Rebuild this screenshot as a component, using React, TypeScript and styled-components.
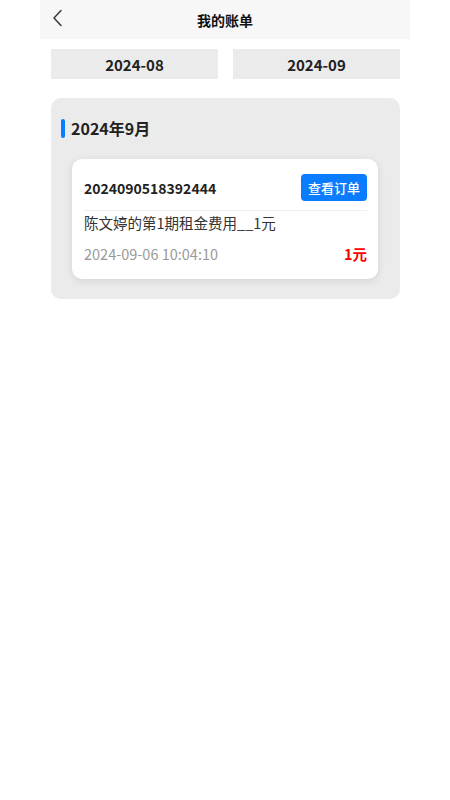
import React from 'react'
import styled, { createGlobalStyle } from 'styled-components'

const GlobalStyle = createGlobalStyle`
  body {
    margin: 0;
    background: #fff;
    font-family: "Noto Sans CJK SC", "Noto Sans", sans-serif;
    color: #222;
  }
`

const Page = styled.div`
  width: 370px;
  margin: 0 auto;
`

const Header = styled.div`
  height: 39px;
  background: #f7f7f7;
  display: flex;
  align-items: center;
  justify-content: center;
  position: relative;
`

const BackButton = styled.div`
  position: absolute;
  left: 12px;
  top: 9px;
  width: 14px;
  height: 18px;
  display: flex;
  align-items: center;
`

const Title = styled.h1`
  margin: 0;
  font-size: 14px;
  font-weight: 700;
  color: #111;
`

const MonthTabs = styled.div`
  display: grid;
  grid-template-columns: 1fr 1fr;
  gap: 15px;
  padding: 10px 10px 0 11px;
`

const MonthTab = styled.div`
  height: 30px;
  background: #ebebeb;
  display: flex;
  align-items: center;
  justify-content: center;
  font-size: 15px;
  font-weight: 700;
  color: #222;
`

const Section = styled.div`
  margin: 19px 10px 0 11px;
  background: #ebebeb;
  border-radius: 10px;
  padding: 20px 22px 20px 10px;
`

const SectionTitle = styled.div`
  display: flex;
  align-items: center;
  gap: 6px;
  font-size: 16px;
  font-weight: 700;
  color: #222;
  height: 20px;
`

const Bar = styled.span`
  width: 4px;
  height: 19px;
  border-radius: 2px;
  background: #0a7cff;
`

const Card = styled.div`
  margin: 21px 0 0 11px;
  background: #fff;
  border-radius: 10px;
  box-shadow: 0 2px 8px rgba(0, 0, 0, 0.1);
  padding: 15px 11px 14px 12px;
`

const CardTop = styled.div`
  display: flex;
  align-items: center;
  justify-content: space-between;
  padding-bottom: 9px;
  border-bottom: 1px solid #eeeeee;
`

const OrderNo = styled.span`
  font-size: 14px;
  font-weight: 700;
  color: #222;
`

const ViewButton = styled.button`
  width: 66px;
  height: 27px;
  border: none;
  border-radius: 4px;
  background: #0a7cff;
  color: #fff;
  font-family: inherit;
  font-size: 13px;
  font-weight: 500;
  padding: 0;
`

const Desc = styled.div`
  font-size: 14.5px;
  color: #333;
  margin-top: 1px;
  line-height: 22px;
`

const CardBottom = styled.div`
  display: flex;
  align-items: center;
  justify-content: space-between;
  margin-top: 9px;
  line-height: 22px;
`

const DateText = styled.span`
  font-size: 14.5px;
  color: #999;
`

const Amount = styled.span`
  font-size: 14.5px;
  font-weight: 700;
  color: #ff0000;
`

export default function App() {
  return (
    <>
      <GlobalStyle />
      <Page>
        <Header>
          <BackButton>
            <svg width="12" height="18" viewBox="0 0 12 18" fill="none">
              <path d="M9 1.5L2 9l7 7.5" stroke="#333" strokeWidth="1.4" strokeLinecap="round" strokeLinejoin="round" />
            </svg>
          </BackButton>
          <Title>我的账单</Title>
        </Header>
        <MonthTabs>
          <MonthTab>2024-08</MonthTab>
          <MonthTab>2024-09</MonthTab>
        </MonthTabs>
        <Section>
          <SectionTitle>
            <Bar />
            2024年9月
          </SectionTitle>
          <Card>
            <CardTop>
              <OrderNo>2024090518392444</OrderNo>
              <ViewButton>查看订单</ViewButton>
            </CardTop>
            <Desc>陈文婷的第1期租金费用__1元</Desc>
            <CardBottom>
              <DateText>2024-09-06 10:04:10</DateText>
              <Amount>1元</Amount>
            </CardBottom>
          </Card>
        </Section>
      </Page>
    </>
  )
}
